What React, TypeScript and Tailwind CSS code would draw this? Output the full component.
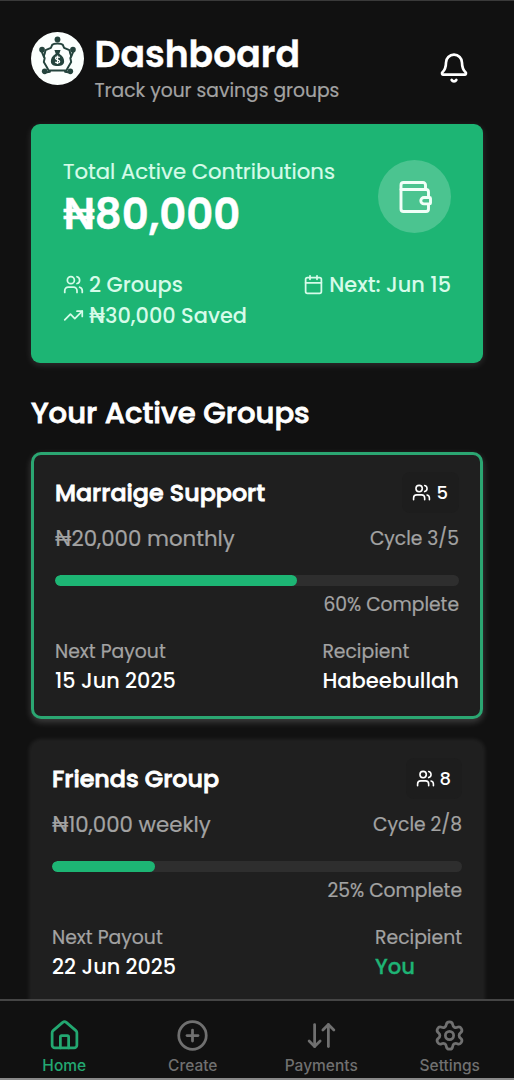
import type { ReactNode } from "react";
import {
  ArrowDownUp,
  Bell,
  Calendar,
  CirclePlus,
  House,
  Settings,
  TrendingUp,
  Users,
} from "lucide-react";

function Logo() {
  return (
    <svg viewBox="0 0 60 60" className="size-[53px] shrink-0" fill="none">
      <circle cx="30" cy="30" r="30" fill="#fbfffd" />
      <g stroke="#24443d" strokeWidth="2.2" strokeLinejoin="round" strokeLinecap="round">
        <path d="M24 14.500c2-2 10-2 12 0l1.500 3.500 6 2.500 1 4c1.500 2 1.500 3 0 5l1 4.500-3 5-2.500 4.500H20L17.500 39l-3-5 1-4.500c-1.500-2-1.500-3 0-5l1-4 6-2.500Z" />
        <path d="M12.500 23l2 5M47.500 23l-2 5M18 45.500l3.500-.500M42 45.500l-3.500-.500" />
      </g>
      <g fill="#24443d">
        <circle cx="30" cy="8.500" r="3.300" />
        <circle cx="12.500" cy="20" r="3.200" />
        <circle cx="47.500" cy="20" r="3.200" />
        <circle cx="15.500" cy="44.500" r="3.200" />
        <circle cx="44.500" cy="44.500" r="3.200" />
        <path d="M26.500 20.500h7l-1.500 4c4 2.500 5.500 5.500 5.500 8.500 0 4-3 5.500-7.500 5.500s-7.500-1.500-7.500-5.500c0-3 1.500-6 5.500-8.500Z" />
      </g>
      <path
        d="M32.500 29c-.8-1-4.800-1.400-4.800.8s4.800 1.200 4.800 3.500-4 2-5 .6M30 26.700v9.500"
        stroke="#fbfffd"
        strokeWidth="1.400"
      />
    </svg>
  );
}

function WalletIcon() {
  return (
    <svg
      viewBox="0 0 36 36"
      className="size-9"
      fill="none"
      stroke="#f1fff8"
      strokeWidth="2.900"
      strokeLinecap="round"
      strokeLinejoin="round"
    >
      <path d="M28.500 10.500V6A2.500 2.500 0 0 0 26 3.500H6.500A2.500 2.500 0 0 0 4 6v24a2.500 2.500 0 0 0 2.500 2.500H29a2.500 2.500 0 0 0 2.500-2.500v-4" />
      <path d="M4 10.500h25a2.500 2.500 0 0 1 2.500 2.500v4.500" />
      <path d="M32.500 18.500h-5.500a3.200 3.200 0 0 0 0 6.400h5.500a1 1 0 0 0 1-1v-4.400a1 1 0 0 0-1-1Z" />
    </svg>
  );
}

type Group = {
  name: string;
  amount: string;
  members: number;
  cycle: string;
  percent: number;
  payout: string;
  recipient: string;
  recipientClass: string;
  frame: string;
};

const groups: Group[] = [
  {
    name: "Marraige Support",
    amount: "₦20,000 monthly",
    members: 5,
    cycle: "Cycle 3/5",
    percent: 60,
    payout: "15 Jun 2025",
    recipient: "Habeebullah",
    recipientClass: "text-white",
    frame: "border-[3px] border-[#2ba672] px-[21px] pt-[17px] shadow-[0_3px_7px_rgba(255,255,255,0.2)]",
  },
  {
    name: "Friends Group",
    amount: "₦10,000 weekly",
    members: 8,
    cycle: "Cycle 2/8",
    percent: 25,
    payout: "22 Jun 2025",
    recipient: "You",
    recipientClass: "text-[#1eb475] [-webkit-text-stroke:0.3px]",
    frame: "px-[21px] pt-[17px] shadow-[0_0_4px_2px_rgba(255,255,255,0.07)]",
  },
];

function GroupCard({ group }: { group: Group }) {
  return (
    <section className={`h-[267px] shrink-0 rounded-[10px] bg-[#1f1f1f] ${group.frame}`}>
      <div className="flex h-[41px] items-center justify-between">
        <h3 className="text-[23.800px] font-medium text-white [-webkit-text-stroke:0.8px]">{group.name}</h3>
        <div className="flex h-[41px] items-center gap-[5px] rounded-lg bg-[#1d1d1d] pr-[11px] pl-[10px] text-[18px] font-medium text-white">
          <Users className="size-[19px]" strokeWidth={2} />
          {group.members}
        </div>
      </div>
      <div className="mt-[9px] flex h-[34px] items-center justify-between text-[#a3a3a3] [-webkit-text-stroke:0.2px]">
        <span className="text-[21.300px]">{group.amount}</span>
        <span className="text-[18.700px]">{group.cycle}</span>
      </div>
      <div className="mt-[19px] h-[11px] overflow-hidden rounded-full bg-[#2e2e2e]">
        <div className="h-full rounded-full bg-[#1db574]" style={{ width: `${group.percent}%` }} />
      </div>
      <div className="mt-[5px] flex h-7 items-center justify-end text-[18.700px] text-[#a3a3a3] [-webkit-text-stroke:0.2px]">
        {group.percent}% Complete
      </div>
      <div className="mt-[18px] flex justify-between">
        <div>
          <div className="h-[29px] text-[18.800px] leading-[29px] text-[#a3a3a3] [-webkit-text-stroke:0.2px]">Next Payout</div>
          <div className="h-[30px] text-[20.800px] leading-[30px] font-medium text-white">{group.payout}</div>
        </div>
        <div>
          <div className="h-[29px] text-[18.800px] leading-[29px] text-[#a3a3a3] [-webkit-text-stroke:0.2px]">Recipient</div>
          <div className={`h-[30px] text-[21.100px] leading-[30px] font-medium ${group.recipientClass}`}>
            {group.recipient}
          </div>
        </div>
      </div>
    </section>
  );
}

function NavItem({ icon, label, active }: { icon: ReactNode; label: string; active?: boolean }) {
  return (
    <div className={`flex flex-1 flex-col items-center ${active ? "text-[#23a871]" : "text-[#707070]"}`}>
      {icon}
      <span className="mt-[3px] text-[15.500px] leading-[22px] font-medium font-['Inter',sans-serif]">{label}</span>
    </div>
  );
}

export default function App() {
  return (
    <div className="flex h-[1080px] w-full flex-col overflow-hidden border-t border-[#3a3a3a] bg-[#111111] font-['Poppins','Inter',sans-serif]">
      <main className="flex min-h-0 flex-1 flex-col overflow-hidden px-[31px]">
        <header className="flex h-[123px] shrink-0 items-start pt-[31px]">
          <Logo />
          <div className="ml-[10.500px] flex-1">
            <h1 className="h-[44px] text-[36.200px] leading-[45px] font-semibold text-white [-webkit-text-stroke:0.4px]">
              Dashboard
            </h1>
            <p className="text-[18.700px] leading-[29px] text-[#a3a3a3] [-webkit-text-stroke:0.2px]">
              Track your savings groups
            </p>
          </div>
          <Bell className="mt-5 mr-[13px] size-8 text-white" strokeWidth={2} />
        </header>

        <section className="h-[239px] shrink-0 rounded-[9px] bg-[#1db574] px-8 pt-[34px] text-[#d6fbe9] shadow-[0_2px_7px_rgba(255,255,255,0.13)]">
          <div className="flex h-[95px] justify-between">
            <div>
              <p className="text-[21.200px] leading-[27px] [-webkit-text-stroke:0.2px]">Total Active Contributions</p>
              <p className="text-[41.800px] leading-[59px] font-semibold text-white [-webkit-text-stroke:0.5px]">
                ₦80,000
              </p>
            </div>
            <div className="mt-[2px] flex size-[73px] items-center justify-center rounded-full bg-[#4bc490]">
              <WalletIcon />
            </div>
          </div>
          <div className="mt-[16px] flex h-[31px] items-center justify-between text-[20.900px] font-medium">
            <span className="flex items-center gap-[5px]">
              <Users className="size-[21px]" strokeWidth={2} />2 Groups
            </span>
            <span className="flex items-center gap-[5px]">
              <Calendar className="size-[21px]" strokeWidth={2} />
              Next: Jun 15
            </span>
          </div>
          <div className="flex h-[31px] items-center gap-[5px] text-[20.900px] font-medium">
            <TrendingUp className="size-[21px]" strokeWidth={2} />
            ₦30,000 Saved
          </div>
        </section>

        <h2 className="h-[89px] shrink-0 pt-[30px] text-[29.100px] leading-10 font-medium text-white [-webkit-text-stroke:0.8px]">
          Your Active Groups
        </h2>

        <div className="flex flex-col gap-[22px]">
          {groups.map((group) => (
            <GroupCard key={group.name} group={group} />
          ))}
        </div>
      </main>

      <nav className="flex h-[81px] shrink-0 border-t-2 border-b-2 border-t-[#454545] border-b-[#8a8a8a] bg-[#111111] pt-[18px]">
        <NavItem icon={<House className="size-[33px]" />} label="Home" active />
        <NavItem icon={<CirclePlus className="size-[33px]" />} label="Create" />
        <NavItem icon={<ArrowDownUp className="size-[33px]" />} label="Payments" />
        <NavItem icon={<Settings className="size-[33px]" />} label="Settings" />
      </nav>
    </div>
  );
}
